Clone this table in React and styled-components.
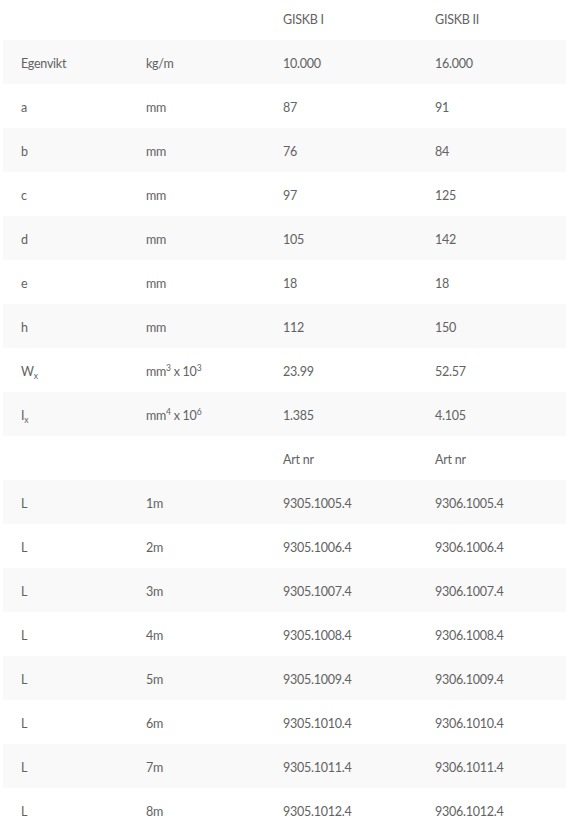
import React from "react";
import styled, { createGlobalStyle } from "styled-components";

const Global = createGlobalStyle`
  html, body { margin: 0; padding: 0; background: #fff; }
  body { font-family: Lato, "Open Sans", sans-serif; }
`;

const Table = styled.div`
  margin: -4px 2px 0 3px;
  display: flex;
  flex-direction: column;
  color: #626262;
  font-size: 12.5px;
  letter-spacing: -0.25px;
`;

const Row = styled.div`
  display: grid;
  grid-template-columns: 125px 137px 152px 1fr;
  height: 44px;
  align-items: center;
  background: ${(p) => (p.$striped ? "#f9f9f9" : "#fff")};
`;

const Cell = styled.div`
  padding: 4px 0 0 18px;
  white-space: nowrap;
  line-height: 1;
  sup, sub { font-size: 8.5px; line-height: 0; }
  sup { vertical-align: 5px; }
  sub { vertical-align: -3px; }
`;

const rows = [
  ["", "", "GISKB I", "GISKB II"],
  ["Egenvikt", "kg/m", "10.000", "16.000"],
  ["a", "mm", "87", "91"],
  ["b", "mm", "76", "84"],
  ["c", "mm", "97", "125"],
  ["d", "mm", "105", "142"],
  ["e", "mm", "18", "18"],
  ["h", "mm", "112", "150"],
  [<>W<sub>x</sub></>, <>mm<sup>3</sup> x 10<sup>3</sup></>, "23.99", "52.57"],
  [<>I<sub>x</sub></>, <>mm<sup>4</sup> x 10<sup>6</sup></>, "1.385", "4.105"],
  ["", "", "Art nr", "Art nr"],
  ["L", "1m", "9305.1005.4", "9306.1005.4"],
  ["L", "2m", "9305.1006.4", "9306.1006.4"],
  ["L", "3m", "9305.1007.4", "9306.1007.4"],
  ["L", "4m", "9305.1008.4", "9306.1008.4"],
  ["L", "5m", "9305.1009.4", "9306.1009.4"],
  ["L", "6m", "9305.1010.4", "9306.1010.4"],
  ["L", "7m", "9305.1011.4", "9306.1011.4"],
  ["L", "8m", "9305.1012.4", "9306.1012.4"],
];

export default function App() {
  return (
    <>
      <Global />
      <Table>
        {rows.map((r, i) => (
          <Row key={i} $striped={i % 2 === 1}>
            {r.map((c, j) => (
              <Cell key={j}>{c}</Cell>
            ))}
          </Row>
        ))}
      </Table>
    </>
  );
}
